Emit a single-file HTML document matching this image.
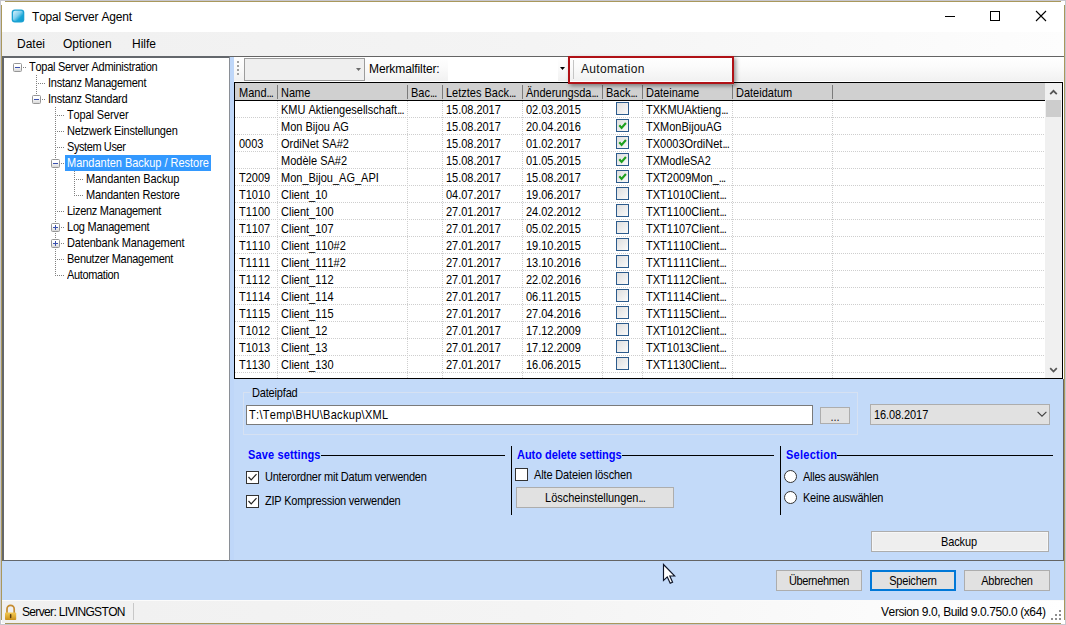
<!DOCTYPE html>
<html><head><meta charset="utf-8"><title>Topal Server Agent</title>
<style>
*{box-sizing:border-box;margin:0;padding:0}
html,body{width:1066px;height:625px;overflow:hidden;background:#fff}
body{position:relative;font-family:"Liberation Sans",sans-serif;font-size:11px;color:#000;line-height:13px;font-kerning:none;letter-spacing:0}
.el{letter-spacing:-0.9px}
.ns{letter-spacing:0}
.abs,.t,.hsep,.vdot,.hdot,.cb,.btn,.line,.vline{position:absolute}
.t{white-space:nowrap;height:13px;line-height:13px}
#win{position:absolute;left:0;top:0;width:1066px;height:625px;background:#c3daf9;border:1px solid #c7c7cf;box-shadow:inset 0 0 0 1px #a9985c}
.notch{position:absolute;width:4px;height:4px;background:#fff}
#title{position:absolute;left:2px;top:2px;width:1062px;height:30px;background:#fff}
#title .cap{position:absolute;left:30px;top:7px;font-size:12px;line-height:16px;white-space:nowrap;letter-spacing:-0.2px}
#menu{position:absolute;left:2px;top:32px;width:1062px;height:24px;background:linear-gradient(90deg,#f0f0f0 0%,#f4f4f4 50%,#fdfdfd 100%)}
#menu span{position:absolute;top:4px;font-size:12px;line-height:16px;white-space:nowrap}
#tree{position:absolute;left:2px;top:56px;width:228px;height:505px;background:#fff;border:1px solid #63676c;border-right-color:#8a8f96;border-width:2px 1px 1px 2px}
#rpanel{position:absolute;left:230px;top:56px;width:834px;height:505px;border:1px solid #646464;border-left:none;background:#c3daf9}
#split{position:absolute;left:230px;top:57px;width:4px;height:503px;background:#bfd7f9}
#tool{position:absolute;left:234px;top:57px;width:830px;height:25px;background:linear-gradient(180deg,#ffffff 0%,#fbfbfb 40%,#f1f1f1 100%);border-bottom:1px solid #fff}
#grid{position:absolute;left:234px;top:82px;width:829px;height:297px;background:#fff;border:1px solid #000}
#ghead{position:absolute;left:235px;top:83px;width:810px;height:17px;background:#d0d0d0}
#gheadline{position:absolute;left:235px;top:100px;width:810px;height:1px;background:#000}
.hd{}
.hsep{top:85px;width:1px;height:14px;background:#7b7b7b}
.vdot{top:101px;width:1px;height:277px;background-image:linear-gradient(180deg,#cecece 50%,transparent 50%);background-size:1px 2px}
.hdot{left:235px;width:810px;height:1px;background-image:linear-gradient(90deg,#cecece 50%,transparent 50%);background-size:2px 1px}
.cb{width:13px;height:13px;border:1px solid #333;background:#fff}
.cb svg{position:absolute;left:0;top:0}
#vscroll{position:absolute;left:1045px;top:83px;width:17px;height:295px;background:#f0f0f0}
#vthumb{position:absolute;left:1046px;top:100px;width:15px;height:17px;background:#cdcdcd}
.btn{background:#e1e1e1;border:1px solid #adadad;text-align:center;white-space:nowrap}
.line{height:1px;background:#000}
.vline{width:1px;background:#000}
.sec{position:absolute;font-weight:bold;color:#0000ff;white-space:nowrap;height:13px;line-height:13px;font-size:11px}
.sel{background:#3399ff;color:#fff}
.tl{position:absolute;white-space:nowrap;height:16px;line-height:16px;padding:0 2px 0 1px}
.box{position:absolute;width:9px;height:9px;border:1px solid #969696;border-radius:1.5px;background:linear-gradient(180deg,#fff 30%,#d9d9d9)}
.box i{position:absolute;left:1px;top:3px;width:5px;height:1px;background:#3a50ae}
.box b{position:absolute;left:3px;top:1px;width:1px;height:5px;background:#3a50ae}
.dh{position:absolute;height:1px;background-image:linear-gradient(90deg,#808080 50%,transparent 50%);background-size:2px 1px}
.dv{position:absolute;width:1px;background-image:linear-gradient(180deg,#808080 50%,transparent 50%);background-size:1px 2px}
#status{position:absolute;left:2px;top:600px;width:1062px;height:23px;background:linear-gradient(90deg,#f0f0f0 0%,#f4f4f4 50%,#ffffff 100%);box-shadow:inset 0 1px 0 #fbfbfb}
.radio{position:absolute;width:13px;height:13px;border:1px solid #333;border-radius:50%;background:#fff}
.gc{border-color:#2c5b8c;background:linear-gradient(135deg,#dedede,#fafafa)}
.dt{letter-spacing:-0.03px}
.sy{display:inline-block;line-height:13px;transform-origin:0 10.3px;transform:translateY(1.4px) scaleY(1.13)}
.tl .sy{transform:scaleY(1.13)}

</style></head><body>
<div id="win"></div>
<div class="notch" style="left:1px;top:1px"></div><div class="notch" style="left:1061px;top:1px"></div><div class="notch" style="left:1px;top:620px"></div><div class="notch" style="left:1061px;top:620px"></div>
<div id="title">
 <svg class="abs" style="left:9px;top:7px" width="14" height="14" viewBox="0 0 14 14"><defs><linearGradient id="ig" x1="0" y1="0" x2="1" y2="1"><stop offset="0" stop-color="#d6f0fa"/><stop offset="0.45" stop-color="#7fcfee"/><stop offset="0.7" stop-color="#1aa6d6"/><stop offset="1" stop-color="#0f9bcc"/></linearGradient></defs><rect x="0.7" y="0.4" width="12.6" height="13" rx="3.2" fill="#1ba1d2"/><rect x="2" y="1.8" width="10" height="10.2" rx="2" fill="url(#ig)"/></svg>
 <div class="cap">Topal Server Agent</div>
 <svg class="abs" style="left:943px;top:8px" width="12" height="12" viewBox="0 0 12 12"><path d="M0 6.5 H10" stroke="#000" stroke-width="1"/></svg>
 <svg class="abs" style="left:988px;top:8px" width="12" height="12" viewBox="0 0 12 12"><rect x="0.5" y="1.5" width="9" height="9" fill="none" stroke="#000" stroke-width="1"/></svg>
 <svg class="abs" style="left:1033px;top:8px" width="12" height="12" viewBox="0 0 12 12"><path d="M1 1 L11 11 M11 1 L1 11" stroke="#000" stroke-width="1.1"/></svg>
</div>
<div id="menu"><span style="left:15px">Datei</span><span style="left:61px">Optionen</span><span style="left:130px">Hilfe</span></div>

<div id="tree"></div>
<!-- tree content (absolute to body) -->
<div class="dh" style="left:23px;top:67px;width:3px"></div>
<div class="dv" style="left:36px;top:75px;height:19px"></div>
<div class="dh" style="left:38px;top:83px;width:7px"></div>
<div class="dh" style="left:42px;top:99px;width:3px"></div>
<div class="dv" style="left:55px;top:107px;height:169px"></div>
<div class="dh" style="left:57px;top:115px;width:7px"></div>
<div class="dh" style="left:57px;top:131px;width:7px"></div>
<div class="dh" style="left:57px;top:147px;width:7px"></div>
<div class="dh" style="left:57px;top:211px;width:7px"></div>
<div class="dh" style="left:57px;top:259px;width:7px"></div>
<div class="dh" style="left:57px;top:275px;width:7px"></div>
<div class="dh" style="left:61px;top:163px;width:3px"></div>
<div class="dh" style="left:61px;top:227px;width:3px"></div>
<div class="dh" style="left:61px;top:243px;width:3px"></div>
<div class="dv" style="left:74px;top:171px;height:25px"></div>
<div class="dh" style="left:76px;top:179px;width:7px"></div>
<div class="dh" style="left:76px;top:195px;width:7px"></div>
<div class="box" style="left:13px;top:63px"><i></i></div>
<div class="box" style="left:32px;top:95px"><i></i></div>
<div class="box" style="left:51px;top:159px"><i></i></div>
<div class="box" style="left:51px;top:223px"><i></i><b></b></div>
<div class="box" style="left:51px;top:239px"><i></i><b></b></div>
<div class="tl" style="left:28px;top:59px;letter-spacing:-0.27px"><span class="sy">Topal Server Administration</span></div>
<div class="tl" style="left:47px;top:75px;letter-spacing:-0.25px"><span class="sy">Instanz Management</span></div>
<div class="tl" style="left:47px;top:91px;letter-spacing:-0.24px"><span class="sy">Instanz Standard</span></div>
<div class="tl" style="left:66px;top:107px;letter-spacing:-0.13px"><span class="sy">Topal Server</span></div>
<div class="tl" style="left:66px;top:123px;letter-spacing:-0.20px"><span class="sy">Netzwerk Einstellungen</span></div>
<div class="tl" style="left:66px;top:139px;letter-spacing:-0.41px"><span class="sy">System User</span></div>
<div class="tl sel" style="left:65px;top:155px;width:146px;padding-left:2px;letter-spacing:-0.02px"><span class="sy">Mandanten Backup / Restore</span></div>
<div class="tl" style="left:85px;top:171px;letter-spacing:-0.09px"><span class="sy">Mandanten Backup</span></div>
<div class="tl" style="left:85px;top:187px;letter-spacing:-0.17px"><span class="sy">Mandanten Restore</span></div>
<div class="tl" style="left:66px;top:203px;letter-spacing:-0.29px"><span class="sy">Lizenz Management</span></div>
<div class="tl" style="left:66px;top:219px;letter-spacing:-0.23px"><span class="sy">Log Management</span></div>
<div class="tl" style="left:66px;top:235px;letter-spacing:-0.15px"><span class="sy">Datenbank Management</span></div>
<div class="tl" style="left:66px;top:251px;letter-spacing:-0.27px"><span class="sy">Benutzer Management</span></div>
<div class="tl" style="left:66px;top:267px;letter-spacing:-0.36px"><span class="sy">Automation</span></div>

<div id="rpanel"></div>
<div id="split"></div>
<div id="tool">
 <div class="abs" style="left:3px;top:4px;width:2px;height:16px;background-image:linear-gradient(180deg,#a0a0a0 50%,transparent 50%);background-size:2px 4px"></div>
 <div class="abs" style="left:10px;top:1px;width:121px;height:23px;background:#efefef;border:1px solid #9c9c9c"></div>
 <svg class="abs" style="left:122px;top:11px" width="5" height="3" viewBox="0 0 5 3"><path d="M0 0 H5 L2.5 3 Z" fill="#6a6a6a"/></svg>
 <div class="abs" style="left:214px;top:1px;width:110px;height:23px;background:#fff"></div>
 <div class="abs" style="left:135px;top:4px;font-size:12px;line-height:16px;white-space:nowrap;letter-spacing:-0.1px">Merkmalfilter:</div>
 <svg class="abs" style="left:326px;top:10px" width="5" height="3" viewBox="0 0 5 3"><path d="M0 0 H5 L2.5 3 Z" fill="#000"/></svg>
 <div class="abs" style="left:339px;top:3px;width:1px;height:19px;background:#c5c5c5"></div>
 <div class="abs" style="left:347px;top:4px;font-size:12px;line-height:16px;white-space:nowrap;color:#111;letter-spacing:0.3px">Automation</div>
</div>
<div class="abs" style="z-index:5;left:568px;top:56px;width:166px;height:28px;border:2px solid #b01116;box-shadow:2px 2px 4px rgba(0,0,0,0.4)"></div>

<div class="abs" style="left:1063px;top:82px;width:1px;height:297px;background:#fff"></div>
<div id="grid"></div>
<div id="ghead"></div>
<div id="gheadline"></div>
<div id="vscroll"></div>
<div id="vthumb"></div>
<svg class="abs" style="left:1049px;top:88px" width="9" height="8" viewBox="0 0 9 8"><path d="M1.2 6.2 L4.5 2.8 L7.8 6.2" fill="none" stroke="#555" stroke-width="1.7"/></svg>
<svg class="abs" style="left:1049px;top:366px" width="9" height="8" viewBox="0 0 9 8"><path d="M1.2 2.2 L4.5 5.6 L7.8 2.2" fill="none" stroke="#555" stroke-width="1.7"/></svg>
<div class="t hd" style="left:239px;top:86px"><span class="sy">Mand<span class="el">...</span></span></div>
<div class="t hd" style="left:281px;top:86px"><span class="sy">Name</span></div>
<div class="t hd" style="left:411px;top:86px"><span class="sy">Bac<span class="el">...</span></span></div>
<div class="t hd" style="left:446px;top:86px"><span class="sy">Letztes Back<span class="el">...</span></span></div>
<div class="t hd" style="left:526px;top:86px"><span class="sy">Änderungsda<span class="el">...</span></span></div>
<div class="t hd" style="left:606px;top:86px"><span class="sy">Back<span class="el">...</span></span></div>
<div class="t hd" style="left:646px;top:86px"><span class="sy">Dateiname</span></div>
<div class="t hd" style="left:736px;top:86px"><span class="sy">Dateidatum</span></div>
<div class="hsep" style="left:277px"></div>
<div class="vdot" style="left:277px"></div>
<div class="hsep" style="left:407px"></div>
<div class="vdot" style="left:407px"></div>
<div class="hsep" style="left:442px"></div>
<div class="vdot" style="left:442px"></div>
<div class="hsep" style="left:522px"></div>
<div class="vdot" style="left:522px"></div>
<div class="hsep" style="left:602px"></div>
<div class="vdot" style="left:602px"></div>
<div class="hsep" style="left:642px"></div>
<div class="vdot" style="left:642px"></div>
<div class="hsep" style="left:732px"></div>
<div class="vdot" style="left:732px"></div>
<div class="hsep" style="left:832px"></div>
<div class="vdot" style="left:832px"></div>
<div class="hdot" style="top:117px"></div>
<div class="t" style="left:281px;top:103px"><span class="sy">KMU Aktiengesellschaft<span class="el">...</span></span></div>
<div class="t dt" style="left:446px;top:103px"><span class="sy">15.08.2017</span></div>
<div class="t dt" style="left:526px;top:103px"><span class="sy">02.03.2015</span></div>
<div class="cb gc" style="left:616px;top:102px"></div>
<div class="t" style="left:646px;top:103px"><span class="sy">TXKMUAktieng<span class="el">...</span></span></div>
<div class="hdot" style="top:134px"></div>
<div class="t" style="left:281px;top:120px"><span class="sy">Mon Bijou AG</span></div>
<div class="t dt" style="left:446px;top:120px"><span class="sy">15.08.2017</span></div>
<div class="t dt" style="left:526px;top:120px"><span class="sy">20.04.2016</span></div>
<div class="cb gc" style="left:616px;top:119px"><svg width="11" height="11" viewBox="0 0 11 11"><path d="M2.3 5.3 L4.6 7.9 L8.9 3" fill="none" stroke="#1ea01e" stroke-width="2.1"/></svg></div>
<div class="t" style="left:646px;top:120px"><span class="sy">TXMonBijouAG</span></div>
<div class="hdot" style="top:151px"></div>
<div class="t" style="left:239px;top:137px"><span class="sy">0003</span></div>
<div class="t" style="left:281px;top:137px"><span class="sy">OrdiNet SA#2</span></div>
<div class="t dt" style="left:446px;top:137px"><span class="sy">15.08.2017</span></div>
<div class="t dt" style="left:526px;top:137px"><span class="sy">01.02.2017</span></div>
<div class="cb gc" style="left:616px;top:136px"><svg width="11" height="11" viewBox="0 0 11 11"><path d="M2.3 5.3 L4.6 7.9 L8.9 3" fill="none" stroke="#1ea01e" stroke-width="2.1"/></svg></div>
<div class="t" style="left:646px;top:137px"><span class="sy">TX0003OrdiNet<span class="el">...</span></span></div>
<div class="hdot" style="top:168px"></div>
<div class="t" style="left:281px;top:154px"><span class="sy">Modèle SA#2</span></div>
<div class="t dt" style="left:446px;top:154px"><span class="sy">15.08.2017</span></div>
<div class="t dt" style="left:526px;top:154px"><span class="sy">01.05.2015</span></div>
<div class="cb gc" style="left:616px;top:153px"><svg width="11" height="11" viewBox="0 0 11 11"><path d="M2.3 5.3 L4.6 7.9 L8.9 3" fill="none" stroke="#1ea01e" stroke-width="2.1"/></svg></div>
<div class="t" style="left:646px;top:154px"><span class="sy">TXModleSA2</span></div>
<div class="hdot" style="top:185px"></div>
<div class="t" style="left:239px;top:171px"><span class="sy">T2009</span></div>
<div class="t" style="left:281px;top:171px"><span class="sy">Mon_Bijou_AG_API</span></div>
<div class="t dt" style="left:446px;top:171px"><span class="sy">15.08.2017</span></div>
<div class="t dt" style="left:526px;top:171px"><span class="sy">15.08.2017</span></div>
<div class="cb gc" style="left:616px;top:170px"><svg width="11" height="11" viewBox="0 0 11 11"><path d="M2.3 5.3 L4.6 7.9 L8.9 3" fill="none" stroke="#1ea01e" stroke-width="2.1"/></svg></div>
<div class="t" style="left:646px;top:171px"><span class="sy">TXT2009Mon_<span class="el">...</span></span></div>
<div class="hdot" style="top:202px"></div>
<div class="t" style="left:239px;top:188px"><span class="sy">T1010</span></div>
<div class="t" style="left:281px;top:188px"><span class="sy">Client_10</span></div>
<div class="t dt" style="left:446px;top:188px"><span class="sy">04.07.2017</span></div>
<div class="t dt" style="left:526px;top:188px"><span class="sy">19.06.2017</span></div>
<div class="cb gc" style="left:616px;top:187px"></div>
<div class="t" style="left:646px;top:188px"><span class="sy">TXT1010Client<span class="el">...</span></span></div>
<div class="hdot" style="top:219px"></div>
<div class="t" style="left:239px;top:205px"><span class="sy">T1100</span></div>
<div class="t" style="left:281px;top:205px"><span class="sy">Client_100</span></div>
<div class="t dt" style="left:446px;top:205px"><span class="sy">27.01.2017</span></div>
<div class="t dt" style="left:526px;top:205px"><span class="sy">24.02.2012</span></div>
<div class="cb gc" style="left:616px;top:204px"></div>
<div class="t" style="left:646px;top:205px"><span class="sy">TXT1100Client<span class="el">...</span></span></div>
<div class="hdot" style="top:236px"></div>
<div class="t" style="left:239px;top:222px"><span class="sy">T1107</span></div>
<div class="t" style="left:281px;top:222px"><span class="sy">Client_107</span></div>
<div class="t dt" style="left:446px;top:222px"><span class="sy">27.01.2017</span></div>
<div class="t dt" style="left:526px;top:222px"><span class="sy">05.02.2015</span></div>
<div class="cb gc" style="left:616px;top:221px"></div>
<div class="t" style="left:646px;top:222px"><span class="sy">TXT1107Client<span class="el">...</span></span></div>
<div class="hdot" style="top:253px"></div>
<div class="t" style="left:239px;top:239px"><span class="sy">T1110</span></div>
<div class="t" style="left:281px;top:239px"><span class="sy">Client_110#2</span></div>
<div class="t dt" style="left:446px;top:239px"><span class="sy">27.01.2017</span></div>
<div class="t dt" style="left:526px;top:239px"><span class="sy">19.10.2015</span></div>
<div class="cb gc" style="left:616px;top:238px"></div>
<div class="t" style="left:646px;top:239px"><span class="sy">TXT1110Client<span class="el">...</span></span></div>
<div class="hdot" style="top:270px"></div>
<div class="t" style="left:239px;top:256px"><span class="sy">T1111</span></div>
<div class="t" style="left:281px;top:256px"><span class="sy">Client_111#2</span></div>
<div class="t dt" style="left:446px;top:256px"><span class="sy">27.01.2017</span></div>
<div class="t dt" style="left:526px;top:256px"><span class="sy">13.10.2016</span></div>
<div class="cb gc" style="left:616px;top:255px"></div>
<div class="t" style="left:646px;top:256px"><span class="sy">TXT1111Client<span class="el">...</span></span></div>
<div class="hdot" style="top:287px"></div>
<div class="t" style="left:239px;top:273px"><span class="sy">T1112</span></div>
<div class="t" style="left:281px;top:273px"><span class="sy">Client_112</span></div>
<div class="t dt" style="left:446px;top:273px"><span class="sy">27.01.2017</span></div>
<div class="t dt" style="left:526px;top:273px"><span class="sy">22.02.2016</span></div>
<div class="cb gc" style="left:616px;top:272px"></div>
<div class="t" style="left:646px;top:273px"><span class="sy">TXT1112Client<span class="el">...</span></span></div>
<div class="hdot" style="top:304px"></div>
<div class="t" style="left:239px;top:290px"><span class="sy">T1114</span></div>
<div class="t" style="left:281px;top:290px"><span class="sy">Client_114</span></div>
<div class="t dt" style="left:446px;top:290px"><span class="sy">27.01.2017</span></div>
<div class="t dt" style="left:526px;top:290px"><span class="sy">06.11.2015</span></div>
<div class="cb gc" style="left:616px;top:289px"></div>
<div class="t" style="left:646px;top:290px"><span class="sy">TXT1114Client<span class="el">...</span></span></div>
<div class="hdot" style="top:321px"></div>
<div class="t" style="left:239px;top:307px"><span class="sy">T1115</span></div>
<div class="t" style="left:281px;top:307px"><span class="sy">Client_115</span></div>
<div class="t dt" style="left:446px;top:307px"><span class="sy">27.01.2017</span></div>
<div class="t dt" style="left:526px;top:307px"><span class="sy">27.04.2016</span></div>
<div class="cb gc" style="left:616px;top:306px"></div>
<div class="t" style="left:646px;top:307px"><span class="sy">TXT1115Client<span class="el">...</span></span></div>
<div class="hdot" style="top:338px"></div>
<div class="t" style="left:239px;top:324px"><span class="sy">T1012</span></div>
<div class="t" style="left:281px;top:324px"><span class="sy">Client_12</span></div>
<div class="t dt" style="left:446px;top:324px"><span class="sy">27.01.2017</span></div>
<div class="t dt" style="left:526px;top:324px"><span class="sy">17.12.2009</span></div>
<div class="cb gc" style="left:616px;top:323px"></div>
<div class="t" style="left:646px;top:324px"><span class="sy">TXT1012Client<span class="el">...</span></span></div>
<div class="hdot" style="top:355px"></div>
<div class="t" style="left:239px;top:341px"><span class="sy">T1013</span></div>
<div class="t" style="left:281px;top:341px"><span class="sy">Client_13</span></div>
<div class="t dt" style="left:446px;top:341px"><span class="sy">27.01.2017</span></div>
<div class="t dt" style="left:526px;top:341px"><span class="sy">17.12.2009</span></div>
<div class="cb gc" style="left:616px;top:340px"></div>
<div class="t" style="left:646px;top:341px"><span class="sy">TXT1013Client<span class="el">...</span></span></div>
<div class="hdot" style="top:372px"></div>
<div class="t" style="left:239px;top:358px"><span class="sy">T1130</span></div>
<div class="t" style="left:281px;top:358px"><span class="sy">Client_130</span></div>
<div class="t dt" style="left:446px;top:358px"><span class="sy">27.01.2017</span></div>
<div class="t dt" style="left:526px;top:358px"><span class="sy">16.06.2015</span></div>
<div class="cb gc" style="left:616px;top:357px"></div>
<div class="t" style="left:646px;top:358px"><span class="sy">TXT1130Client<span class="el">...</span></span></div>

<!-- Dateipfad group -->
<div class="abs" style="left:243px;top:392px;width:615px;height:43px;border:1px solid #d6e1f2"></div>
<div class="t" style="left:250px;top:386px;background:#c3daf9;padding:0 2px;letter-spacing:-0.17px"><span class="sy">Dateipfad</span></div>
<div class="abs" style="left:246px;top:405px;width:567px;height:20px;background:#fff;border:1px solid #7a7a7a"></div>
<div class="t" style="left:249px;top:408px;letter-spacing:0.31px"><span class="sy">T:\Temp\BHU\Backup\XML</span></div>
<div class="btn" style="left:820px;top:407px;width:30px;height:17px;line-height:17px;color:#222"><span class="sy">...</span></div>
<div class="btn" style="left:870px;top:404px;width:180px;height:21px"></div>
<div class="t" style="left:874px;top:408px;letter-spacing:-0.09px"><span class="sy">16.08.2017</span></div>
<svg class="abs" style="left:1037px;top:411px" width="10" height="6" viewBox="0 0 10 6"><path d="M0.6 0.8 L5 5.2 L9.4 0.8" fill="none" stroke="#404040" stroke-width="1.1"/></svg>

<!-- Save settings -->
<div class="sec" style="left:248px;top:448px;letter-spacing:0.13px"><span class="sy">Save settings</span></div>
<div class="line" style="left:321px;top:455px;width:184px"></div>
<div class="cb" style="left:246px;top:471px"><svg width="11" height="11" viewBox="0 0 11 11"><path d="M1.5 5 L4.2 7.8 L9.5 2.2" fill="none" stroke="#222" stroke-width="1.2"/></svg></div>
<div class="t" style="left:265px;top:470px;letter-spacing:-0.23px"><span class="sy">Unterordner mit Datum verwenden</span></div>
<div class="cb" style="left:246px;top:495px"><svg width="11" height="11" viewBox="0 0 11 11"><path d="M1.5 5 L4.2 7.8 L9.5 2.2" fill="none" stroke="#222" stroke-width="1.2"/></svg></div>
<div class="t" style="left:265px;top:494px;letter-spacing:-0.23px"><span class="sy">ZIP Kompression verwenden</span></div>
<div class="vline" style="left:511px;top:446px;height:69px"></div>

<!-- Auto delete -->
<div class="sec" style="left:517px;top:448px;letter-spacing:-0.03px"><span class="sy">Auto delete settings</span></div>
<div class="line" style="left:622px;top:455px;width:152px"></div>
<div class="cb" style="left:515px;top:468px"></div>
<div class="t" style="left:534px;top:468px;letter-spacing:-0.15px"><span class="sy">Alte Dateien löschen</span></div>
<div class="btn" style="left:516px;top:487px;width:158px;height:21px;line-height:19px;letter-spacing:-0.05px"><span class="sy">Löscheinstellungen<span class="el">...</span></span></div>
<div class="vline" style="left:780px;top:446px;height:69px"></div>

<!-- Selection -->
<div class="sec" style="left:786px;top:448px;letter-spacing:0.26px"><span class="sy">Selection</span></div>
<div class="line" style="left:837px;top:455px;width:216px"></div>
<div class="radio" style="left:784px;top:470px"></div>
<div class="t" style="left:803px;top:470px;letter-spacing:-0.28px"><span class="sy">Alles auswählen</span></div>
<div class="radio" style="left:784px;top:491px"></div>
<div class="t" style="left:803px;top:491px;letter-spacing:-0.24px"><span class="sy">Keine auswählen</span></div>

<div class="btn" style="left:871px;top:531px;width:178px;height:21px;line-height:19px;background:#eeeeee;box-shadow:inset 0 0 0 1px #f6f6f6;padding-right:2px;letter-spacing:-0.10px"><span class="sy">Backup</span></div>

<div class="btn" style="left:776px;top:570px;width:86px;height:21px;line-height:19px;letter-spacing:-0.34px"><span class="sy">Übernehmen</span></div>
<div class="btn" style="left:870px;top:570px;width:86px;height:21px;line-height:17px;border:2px solid #0078d7;letter-spacing:-0.23px"><span class="sy">Speichern</span></div>
<div class="btn" style="left:964px;top:570px;width:86px;height:21px;line-height:19px;letter-spacing:-0.18px"><span class="sy">Abbrechen</span></div>

<!-- cursor -->
<svg class="abs" style="left:662px;top:563px" width="14" height="22" viewBox="0 0 14 22"><path d="M1.5 1.5 V17.5 L5.3 13.9 L8.2 20.3 L10.6 19.2 L7.8 13 H12.8 Z" fill="#fff" stroke="#0d1428" stroke-width="1.15"/></svg>

<div id="status">
 <svg class="abs" style="left:3px;top:3px" width="12" height="18" viewBox="0 0 12 18"><defs><linearGradient id="lk" x1="0" y1="0" x2="0" y2="1"><stop offset="0" stop-color="#f2c955"/><stop offset="0.5" stop-color="#e0ae36"/><stop offset="1" stop-color="#c98f1c"/></linearGradient></defs><path d="M2 10 V6 A3.6 3.6 0 0 1 9.2 6 V10" fill="none" stroke="#c58b2e" stroke-width="1.7"/><rect x="0" y="9.5" width="11.2" height="7.5" rx="0.8" fill="url(#lk)"/><rect x="4.9" y="11" width="1.5" height="4.2" rx="0.7" fill="#5a3d0a"/></svg>
 <div class="abs" style="left:20px;top:4px;font-size:12px;line-height:16px;white-space:nowrap;letter-spacing:-0.66px">Server: LIVINGSTON</div>
 <div class="abs" style="left:131px;top:3px;width:1px;height:17px;background:#c8c8c8"></div>
 <div class="abs" style="left:879px;top:4px;font-size:12px;line-height:16px;white-space:nowrap;letter-spacing:-0.4px">Version 9.0, Build 9.0.750.0 (x64)</div>
 <svg class="abs" style="left:1049px;top:10px" width="11" height="11" viewBox="0 0 11 11"><g fill="#8e8e8e"><rect x="8" y="0" width="2" height="2"/><rect x="4" y="4" width="2" height="2"/><rect x="8" y="4" width="2" height="2"/><rect x="0" y="8" width="2" height="2"/><rect x="4" y="8" width="2" height="2"/><rect x="8" y="8" width="2" height="2"/></g></svg>
</div>

</body></html>
